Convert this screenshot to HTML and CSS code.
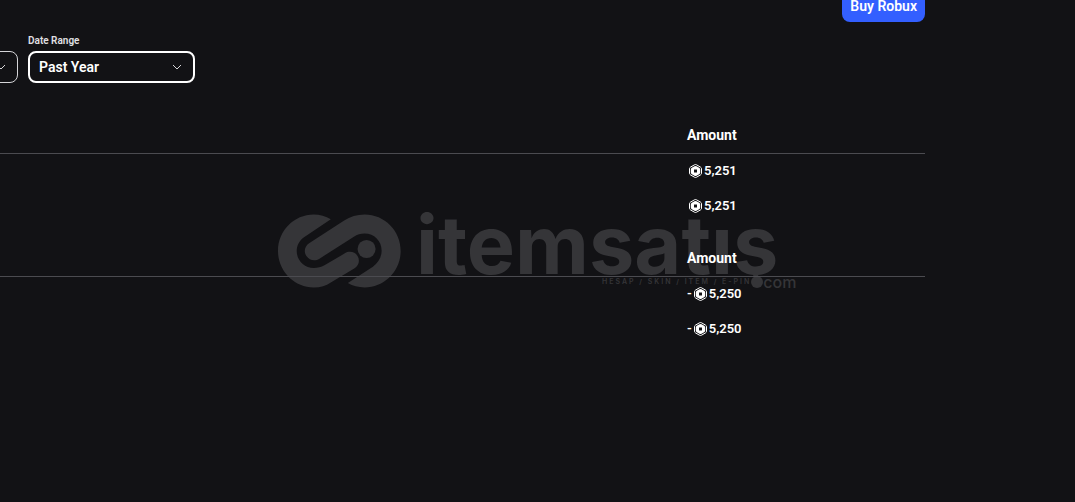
FILE: index.html
```
<!DOCTYPE html>
<html lang="en">
<head>
    <meta charset="UTF-8">
    <meta name="viewport" content="width=device-width, initial-scale=1.0">
    <title>Transactions</title>
    <link rel="stylesheet" href="styles.css">
</head>
<body>
    <svg class="symbols" aria-hidden="true">
        <symbol id="coin" viewBox="0 0 13 14">
            <path d="M5.500 .800a2 2 0 0 1 2 0l4 2.300a2 2 0 0 1 1 1.700v4.400a2 2 0 0 1-1 1.700l-4 2.300a2 2 0 0 1-2 0l-4-2.300a2 2 0 0 1-1-1.700V4.800a2 2 0 0 1 1-1.700z" fill="none" stroke="currentColor" stroke-width="1"/>
            <path fill-rule="evenodd" fill="currentColor" d="M5.500 2.300a2 2 0 0 1 2 0l2.700 1.500a2 2 0 0 1 1 1.700v3a2 2 0 0 1-1 1.700l-2.700 1.500a2 2 0 0 1-2 0l-2.700-1.500a2 2 0 0 1-1-1.700v-3a2 2 0 0 1 1-1.700zM5 5.500v3h3v-3z"/>
        </symbol>
    </svg>

    <div class="page">
        <header class="header">
            <button type="button" class="btn-buy">Buy Robux</button>
        </header>

        <form class="filters">
            <div class="filter filter-type">
                <select class="filter-select" aria-label="Type">
                    <option></option>
                </select>
            </div>
            <div class="filter">
                <label for="range">Date Range</label>
                <select id="range" class="filter-select active">
                    <option>Past Year</option>
                </select>
            </div>
        </form>

        <table class="summary">
            <thead>
                <tr><td></td><th class="amount" scope="col">Amount</th></tr>
            </thead>
            <tbody>
                <tr><td></td><td class="amount"><span class="value"><svg class="coin"><use href="#coin"/></svg>5,251</span></td></tr>
                <tr><td></td><td class="amount"><span class="value"><svg class="coin"><use href="#coin"/></svg>5,251</span></td></tr>
            </tbody>
        </table>

        <table class="summary">
            <thead>
                <tr><td></td><th class="amount" scope="col">Amount</th></tr>
            </thead>
            <tbody>
                <tr><td></td><td class="amount"><span class="value spent">-<svg class="coin"><use href="#coin"/></svg>5,250</span></td></tr>
                <tr><td></td><td class="amount"><span class="value spent">-<svg class="coin"><use href="#coin"/></svg>5,250</span></td></tr>
            </tbody>
        </table>
    </div>

    <div class="watermark">
        <svg class="watermark-logo" viewBox="26 28 368 220" aria-hidden="true">
            <path d="M184 43C169 34 151 29 133 29C74 29 26 78 26 138S74 247 133 247C154 247 169 242 184 232L254 190C268 182 272 166 264 153S239 137 226 145L165 181C155 187 145 189 133 189C105 189 82 166 82 138C82 121 90 106 105 96Z"/>
            <path d="M119 115L224 47C242 35 262 29 285 29C345 29 393 78 393 138S345 247 285 247C266 247 250 243 235 234L310 185C326 173 336 156 336 137C336 108 314 86 285 86C273 86 263 89 253 95L150 161C136 170 120 166 111 153S106 124 119 115Z"/>
            <circle cx="291" cy="132" r="27"/>
        </svg>
        <div class="watermark-text">
            <span class="watermark-name">itemsatış</span>
            <div class="watermark-sub">
                <span class="tagline">HESAP / SKIN / ITEM / E-PIN</span>
                <span class="dot"></span>
                <span class="com">com</span>
            </div>
        </div>
    </div>
</body>
</html>
```
FILE: styles.css
```
* {
    box-sizing: border-box;
}

body {
    margin: 0;
    min-height: 100vh;
    position: relative;
    overflow-x: hidden;
    background: #121215;
    color: #ffffff;
    font-family: Roboto, "Noto Sans", sans-serif;
    font-size: 14px;
    line-height: 20px;
}

.symbols {
    display: none;
}

.page {
    display: flow-root;
    padding-right: 150px;
}

.header {
    display: flex;
    justify-content: flex-end;
    margin-top: -10px;
}

.btn-buy {
    height: 32px;
    padding: 0 8px;
    border: none;
    border-radius: 8px;
    background: #335fff;
    color: #ffffff;
    font: inherit;
    font-weight: 600;
    cursor: pointer;
}

.filters {
    display: flex;
    align-items: flex-end;
    gap: 10px;
    margin-top: 13px;
}

.filter {
    display: flex;
    flex-direction: column;
    width: 167px;
}

.filter-type {
    margin-left: -149px;
}

.filter label {
    font-size: 10px;
    line-height: 12px;
    margin-bottom: 4px;
    color: #e0e0e4;
    font-weight: 600;
}

.filter-select {
    width: 100%;
    height: 32px;
    padding: 0 9px;
    appearance: none;
    border: 1px solid #d5d5d8;
    border-radius: 8px;
    background: url("data:image/svg+xml,%3Csvg xmlns='http://www.w3.org/2000/svg' width='10' height='6' viewBox='0 0 10 6'%3E%3Cpath d='M1 1l4 4 4-4' fill='none' stroke='%23d5d5d8'/%3E%3C/svg%3E") no-repeat right 11px center;
    color: #ffffff;
    font: inherit;
    font-weight: 600;
}

.filter-select.active {
    border: 2px solid #ffffff;
}

.summary {
    width: 100%;
    margin-top: 18px;
    border-collapse: collapse;
    table-layout: fixed;
}

.filters + .summary {
    margin-top: 35px;
}

.summary th,
.summary td {
    height: 35px;
    padding: 0;
    text-align: left;
}

.summary thead tr {
    border-bottom: 1px solid #4b4b50;
}

.summary .amount {
    width: 238px;
}

.summary th {
    font-weight: 700;
}

.value {
    display: flex;
    align-items: center;
    gap: 2px;
    padding-left: 2px;
    font-size: 13px;
    font-weight: 600;
}

.value.spent {
    padding-left: 0;
}

.coin {
    width: 13px;
    height: 14px;
}

/* sits behind the tables */
.watermark {
    position: absolute;
    top: 214px;
    left: 278px;
    z-index: -1;
    display: flex;
    gap: 15px;
    color: #353538;
    pointer-events: none;
}

.watermark-logo {
    width: 123px;
    height: 74px;
    fill: currentColor;
}

.watermark-name {
    display: block;
    overflow: hidden;
    margin-top: -4px;
    padding-top: 4px;
    font-family: Inter, sans-serif;
    font-size: 81px;
    font-weight: 700;
    line-height: 62px;
}

.watermark-sub {
    display: flex;
    align-items: center;
    padding-left: 186px;
    line-height: 12px;
}

.tagline {
    font-family: Inter, sans-serif;
    font-size: 7px;
    font-weight: 600;
    letter-spacing: 2px;
    white-space: nowrap;
}

.dot {
    width: 12px;
    height: 12px;
    border-radius: 50%;
    background: currentColor;
}

.com {
    font-family: Inter, sans-serif;
    font-size: 16px;
    font-weight: 500;
}
```
